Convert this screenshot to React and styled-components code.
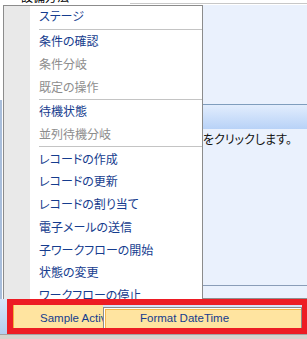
import React from 'react';
import styled, { createGlobalStyle } from 'styled-components';

const GlobalStyle = createGlobalStyle`
  html, body {
    margin: 0;
    padding: 0;
    background: #fff;
    overflow: hidden;
  }
  body {
    font-family: "Noto Sans CJK JP", "Noto Sans", sans-serif;
  }
`;

const Screen = styled.div`
  position: relative;
  width: 307px;
  height: 339px;
  overflow: hidden;
  display: flex;
  flex-direction: column;
  background: #fff;
`;

const TopStrip = styled.div`
  flex: none;
  height: 5px;
  display: flex;
  flex-direction: column;
`;

const TopCaption = styled.div`
  height: 3px;
  overflow: hidden;
  padding-left: 21px;
  font-size: 12px;
  line-height: 12px;
  color: #000;

  & > span {
    display: block;
    margin-top: -9px;
  }
`;

const TopRule = styled.div`
  height: 1px;
  margin-left: 130px;
  background: #c8c8c8;
`;

const MainRow = styled.div`
  flex: none;
  height: 294px;
  display: flex;
`;

const LeftEdge = styled.div`
  flex: none;
  width: 3px;
  display: flex;
  flex-direction: column;
`;

const ScrollLine = styled.div`
  margin-top: 95px;
  width: 2px;
  flex: 1;
  background: #a9bedb;
`;

const Menu = styled.div`
  flex: none;
  width: 200px;
  box-sizing: border-box;
  border-top: 1px solid #8c8c8c;
  border-left: 1px solid #8c8c8c;
  border-right: 1px solid #8c8c8c;
  background: linear-gradient(to right, #e9e9e9 26px, #fff 26px);
  overflow: hidden;
  display: flex;
  flex-direction: column;
  font-feature-settings: "palt" 1;
`;

const MenuItem = styled.div`
  flex: none;
  height: ${(p) => (p.$first ? 22 : 22.7)}px;
  box-sizing: border-box;
  padding-left: 35px;
  padding-bottom: ${(p) => (p.$first ? 3 : 1)}px;
  display: flex;
  align-items: center;
  font-size: 12px;
  white-space: nowrap;
  color: ${(p) => (p.$disabled ? '#8d8d8d' : '#153c8e')};
`;

const Separator = styled.div`
  flex: none;
  height: 1px;
  margin: 0.5px 0 0.5px 35px;
  background: #c4c4c4;
`;

const Panel = styled.div`
  flex: 1;
  display: flex;
  flex-direction: column;
  background: #eaf1fd;
`;

const PanelHeader = styled.div`
  flex: none;
  margin-top: 99px;
  height: 25px;
  box-sizing: border-box;
  border-top: 1px solid #7f9dbd;
  background: linear-gradient(to bottom, #e2edfd, #b8d2f7);
`;

const HintText = styled.div`
  flex: none;
  height: 20px;
  line-height: 20px;
  font-size: 12px;
  color: #111;
  white-space: nowrap;
  font-feature-settings: "palt" 1;
`;

const PanelFooter = styled.div`
  flex: none;
  margin-top: auto;
  height: 14px;
  box-sizing: border-box;
  border-top: 1px solid #8a9db8;
  border-bottom: 1px solid #8f8f8f;
`;

const BottomRow = styled.div`
  flex: none;
  height: 35px;
  display: flex;
  align-items: flex-start;
  background: #d3e3f8;
`;

const LeftTile = styled.div`
  flex: none;
  width: 13px;
  height: 100%;
  background: linear-gradient(to bottom, #d8e6f9, #b4cdef);
`;

const Tab = styled.div`
  flex: none;
  width: 90px;
  height: 30px;
  margin-top: 5px;
  box-sizing: border-box;
  border-top: 1px solid #f2ad3c;
  border-left: 1px solid #f2ad3c;
  background: #ffe4a0;
  overflow: hidden;
  white-space: nowrap;
  padding: 6px 0 0 26px;
  font-family: "Liberation Sans", Arial, sans-serif;
  font-size: 11.5px;
  line-height: 14px;
  color: #153c8e;
`;

const DragBox = styled.div`
  flex: none;
  width: 199px;
  height: 27px;
  margin-top: 8px;
  box-sizing: border-box;
  border: 1px solid #8c8c8c;
  border-bottom: none;
  background: #ffe4a0;
  box-shadow: inset 1px 1px 0 #fff, inset 2px 2px 0 #f4b64c;
  white-space: nowrap;
  padding: 3px 0 0 36px;
  font-family: "Liberation Sans", Arial, sans-serif;
  font-size: 11.5px;
  line-height: 14px;
  color: #153c8e;
`;

const StatusStrip = styled.div`
  flex: none;
  height: 5px;
  box-sizing: border-box;
  border-top: 1px solid #a3a3a3;
  background: #d6d3ce;
`;

const Highlight = styled.div`
  position: absolute;
  left: 7px;
  top: 299px;
  width: 301px;
  height: 35px;
  box-sizing: border-box;
  border: 6px solid #ed1c24;
`;

const menuGroups = [
  [{ label: 'ステージ' }],
  [
    { label: '条件の確認' },
    { label: '条件分岐', disabled: true },
    { label: '既定の操作', disabled: true },
  ],
  [{ label: '待機状態' }, { label: '並列待機分岐', disabled: true }],
  [
    { label: 'レコードの作成' },
    { label: 'レコードの更新' },
    { label: 'レコードの割り当て' },
    { label: '電子メールの送信' },
    { label: '子ワークフローの開始' },
    { label: '状態の変更' },
    { label: 'ワークフローの停止' },
  ],
];

export default function App() {
  return (
    <>
      <GlobalStyle />
      <Screen>
        <TopStrip>
          <TopCaption>
            <span>設備方法</span>
          </TopCaption>
          <TopRule />
        </TopStrip>

        <MainRow>
          <LeftEdge>
            <ScrollLine />
          </LeftEdge>
          <Menu>
            {menuGroups.map((group, gi) => (
              <React.Fragment key={gi}>
                {gi > 0 && <Separator />}
                {group.map((item) => (
                  <MenuItem key={item.label} $disabled={item.disabled} $first={gi === 0}>
                    {item.label}
                  </MenuItem>
                ))}
              </React.Fragment>
            ))}
          </Menu>
          <Panel>
            <PanelHeader />
            <HintText>をクリックします。</HintText>
            <PanelFooter />
          </Panel>
        </MainRow>

        <BottomRow>
          <LeftTile />
          <Tab>Sample Activity</Tab>
          <DragBox>Format DateTime</DragBox>
        </BottomRow>
        <StatusStrip />

        <Highlight />
      </Screen>
    </>
  );
}
